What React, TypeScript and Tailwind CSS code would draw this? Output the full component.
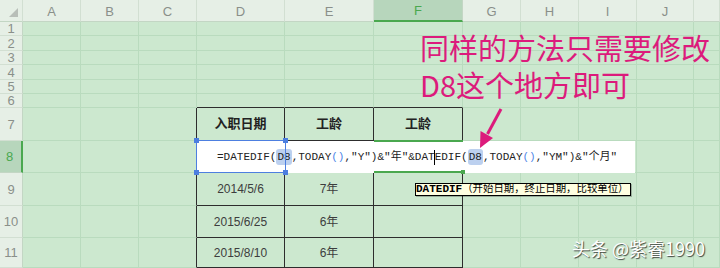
import React from 'react';

const cols = ['A', 'B', 'C', 'D', 'E', 'F', 'G', 'H', 'I', 'J', 'K'];
const rows = [1, 2, 3, 4, 5, 6, 7, 8, 9, 10, 11];

// table content D7:F11
const table: Record<string, string> = {
  D7: '入职日期',
  E7: '工龄',
  F7: '工龄',
  D9: '2014/5/6',
  E9: '7年',
  D10: '2015/6/25',
  E10: '6年',
  D11: '2015/8/10',
  E11: '6年',
};

function cellClass(col: string, row: number) {
  const inTable = row >= 7 && ['D', 'E', 'F'].includes(col);
  const rightBlack = inTable || (col === 'C' && row >= 7);
  const bottomBlack = inTable || (row === 6 && ['D', 'E', 'F'].includes(col));
  return [
    'flex items-center justify-center border-r border-b',
    rightBlack ? 'border-r-[#2d2d2d]' : 'border-r-[#b9dbbe]',
    bottomBlack ? 'border-b-[#2d2d2d]' : 'border-b-[#b9dbbe]',
  ].join(' ');
}

function Ref() {
  return <span className="rounded-[3px] bg-[#bcd0ef] px-px">D8</span>;
}

function Parens() {
  return <span className="text-[#4f86e8]">()</span>;
}

export default function App() {
  return (
    <div className="relative h-[268px] w-[720px] overflow-hidden bg-[#cce8cf] font-['Liberation_Sans','Noto_Sans_CJK_SC',sans-serif]">
      <div className="grid grid-cols-[23px_58px_58px_58px_88px_89px_89px_58px_58px_58px_57px_1fr] grid-rows-[22px_14px_15px_14px_15px_14px_14px_33px_32px_33px_32px_30px]">
        {/* corner */}
        <div className="flex items-end justify-end border-r border-b border-r-[#d2dfd2] border-b-[#c3d6c4] bg-[#e6efe6] pr-[4px] pb-[4px]">
          <svg width="9" height="9" viewBox="0 0 9 9">
            <polygon points="9,0 9,9 0,9" fill="#b8beb8" />
          </svg>
        </div>
        {cols.map((c) =>
          c === 'F' ? (
            <div
              key={c}
              className="flex items-center justify-center border-r border-b-2 border-r-[#c3d6c4] border-b-[#4aa84f] bg-[#b7d6bc] pt-[2px] text-[13px] text-[#4aa84f]"
            >
              {c}
            </div>
          ) : (
            <div
              key={c}
              className="flex items-center justify-center border-r border-b border-r-[#d2dfd2] border-b-[#c3d6c4] bg-[#e6efe6] pt-[2px] text-[13px] text-[#8a8f8a]"
            >
              {c === 'K' ? '' : c}
            </div>
          )
        )}
        {rows.map((r) => (
          <React.Fragment key={r}>
            {r === 8 ? (
              <div className="flex items-center justify-center border-r-2 border-b border-r-[#4aa84f] border-b-[#c3d6c4] bg-[#b7d6bc] pr-[2px] text-[13px] text-[#4aa84f]">
                {r}
              </div>
            ) : (
              <div className="flex items-center justify-center border-r border-b border-r-[#c3d6c4] border-b-[#d2dfd2] bg-[#e6efe6] text-[13px] leading-none text-[#8a8f8a]">
                {r}
              </div>
            )}
            {cols.map((c) => {
              const v = table[`${c}${r}`];
              return (
                <div key={c} className={cellClass(c, r)}>
                  {v && r === 7 && (
                    <span className="text-[13px] font-bold text-[#222]">{v}</span>
                  )}
                  {v && r > 7 && <span className="text-[12px] text-[#3d3d3d]">{v}</span>}
                </div>
              );
            })}
          </React.Fragment>
        ))}
      </div>

      {/* cell editor overlay on row 8 */}
      <div className="absolute top-[141px] left-[197px] flex h-[32px] w-[438px] items-center bg-white pl-[20px] font-['Liberation_Mono','Noto_Sans_CJK_SC',monospace] text-[11px] whitespace-pre text-[#222]">
        <span>=DATEDIF(</span>
        <Ref />
        <span>,TODAY</span>
        <Parens />
        <span>,"Y")&amp;"年"&amp;DAT</span>
        <span className="mx-[-0.5px] h-[15px] w-px bg-black" />
        <span>EDIF(</span>
        <Ref />
        <span>,TODAY</span>
        <Parens />
        <span>,"YM")&amp;"个月"</span>
      </div>

      {/* D8 selection */}
      <div className="absolute top-[140px] left-[196px] h-[33px] w-[90px] border border-[#4d7fe0]">
        <span className="absolute -top-[3px] -left-[3px] h-[5px] w-[5px] bg-[#4d7fe0]" />
        <span className="absolute -top-[3px] -right-[3px] h-[5px] w-[5px] bg-[#4d7fe0]" />
        <span className="absolute -bottom-[3px] -left-[3px] h-[5px] w-[5px] bg-[#4d7fe0]" />
        <span className="absolute -right-[3px] -bottom-[3px] h-[5px] w-[5px] bg-[#4d7fe0]" />
      </div>

      {/* F8 active cell edges */}
      <div className="absolute top-[140px] left-[374px] h-[2px] w-[89px] bg-[#4aa84f]" />
      <div className="absolute top-[171px] left-[374px] h-[2px] w-[89px] bg-[#4aa84f]" />
      <div className="absolute top-[170px] left-[461px] h-[4px] w-[4px] bg-[#4aa84f]" />

      {/* function hint */}
      <div className="absolute top-[183px] left-[415px] flex h-[13px] items-center border border-black bg-[#ffffe1] pr-[2px] font-['Liberation_Mono','Noto_Sans_CJK_SC',monospace] text-[11px] leading-none whitespace-pre text-black shadow-[1px_1px_0_rgba(0,0,0,0.25)]">
        <span className="font-bold">DATEDIF</span>
        <span className="text-[10.4px]">（开始日期，终止日期，比较单位）</span>
      </div>

      {/* annotation */}
      <div className="absolute top-[29px] left-[420px] font-['Noto_Sans_CJK_SC',sans-serif] text-[29px] leading-[37px] text-[#dc1b7c]">
        <div>同样的方法只需要修改</div>
        <div>D8这个地方即可</div>
      </div>
      <svg className="absolute top-0 left-0" width="720" height="268" viewBox="0 0 720 268">
        <line x1="501" y1="109" x2="487.5" y2="134" stroke="#dc1b7c" strokeWidth="3" />
        <polygon points="480,148 480.5,131 493,138" fill="#dc1b7c" />
      </svg>

      {/* watermark */}
      <div className="absolute top-[235px] left-[572px] font-['Noto_Sans_CJK_SC',sans-serif] text-[18px] text-white [text-shadow:1px_1px_1px_rgba(0,0,0,0.7)]">
        头条 @紫睿1990
      </div>
    </div>
  );
}
